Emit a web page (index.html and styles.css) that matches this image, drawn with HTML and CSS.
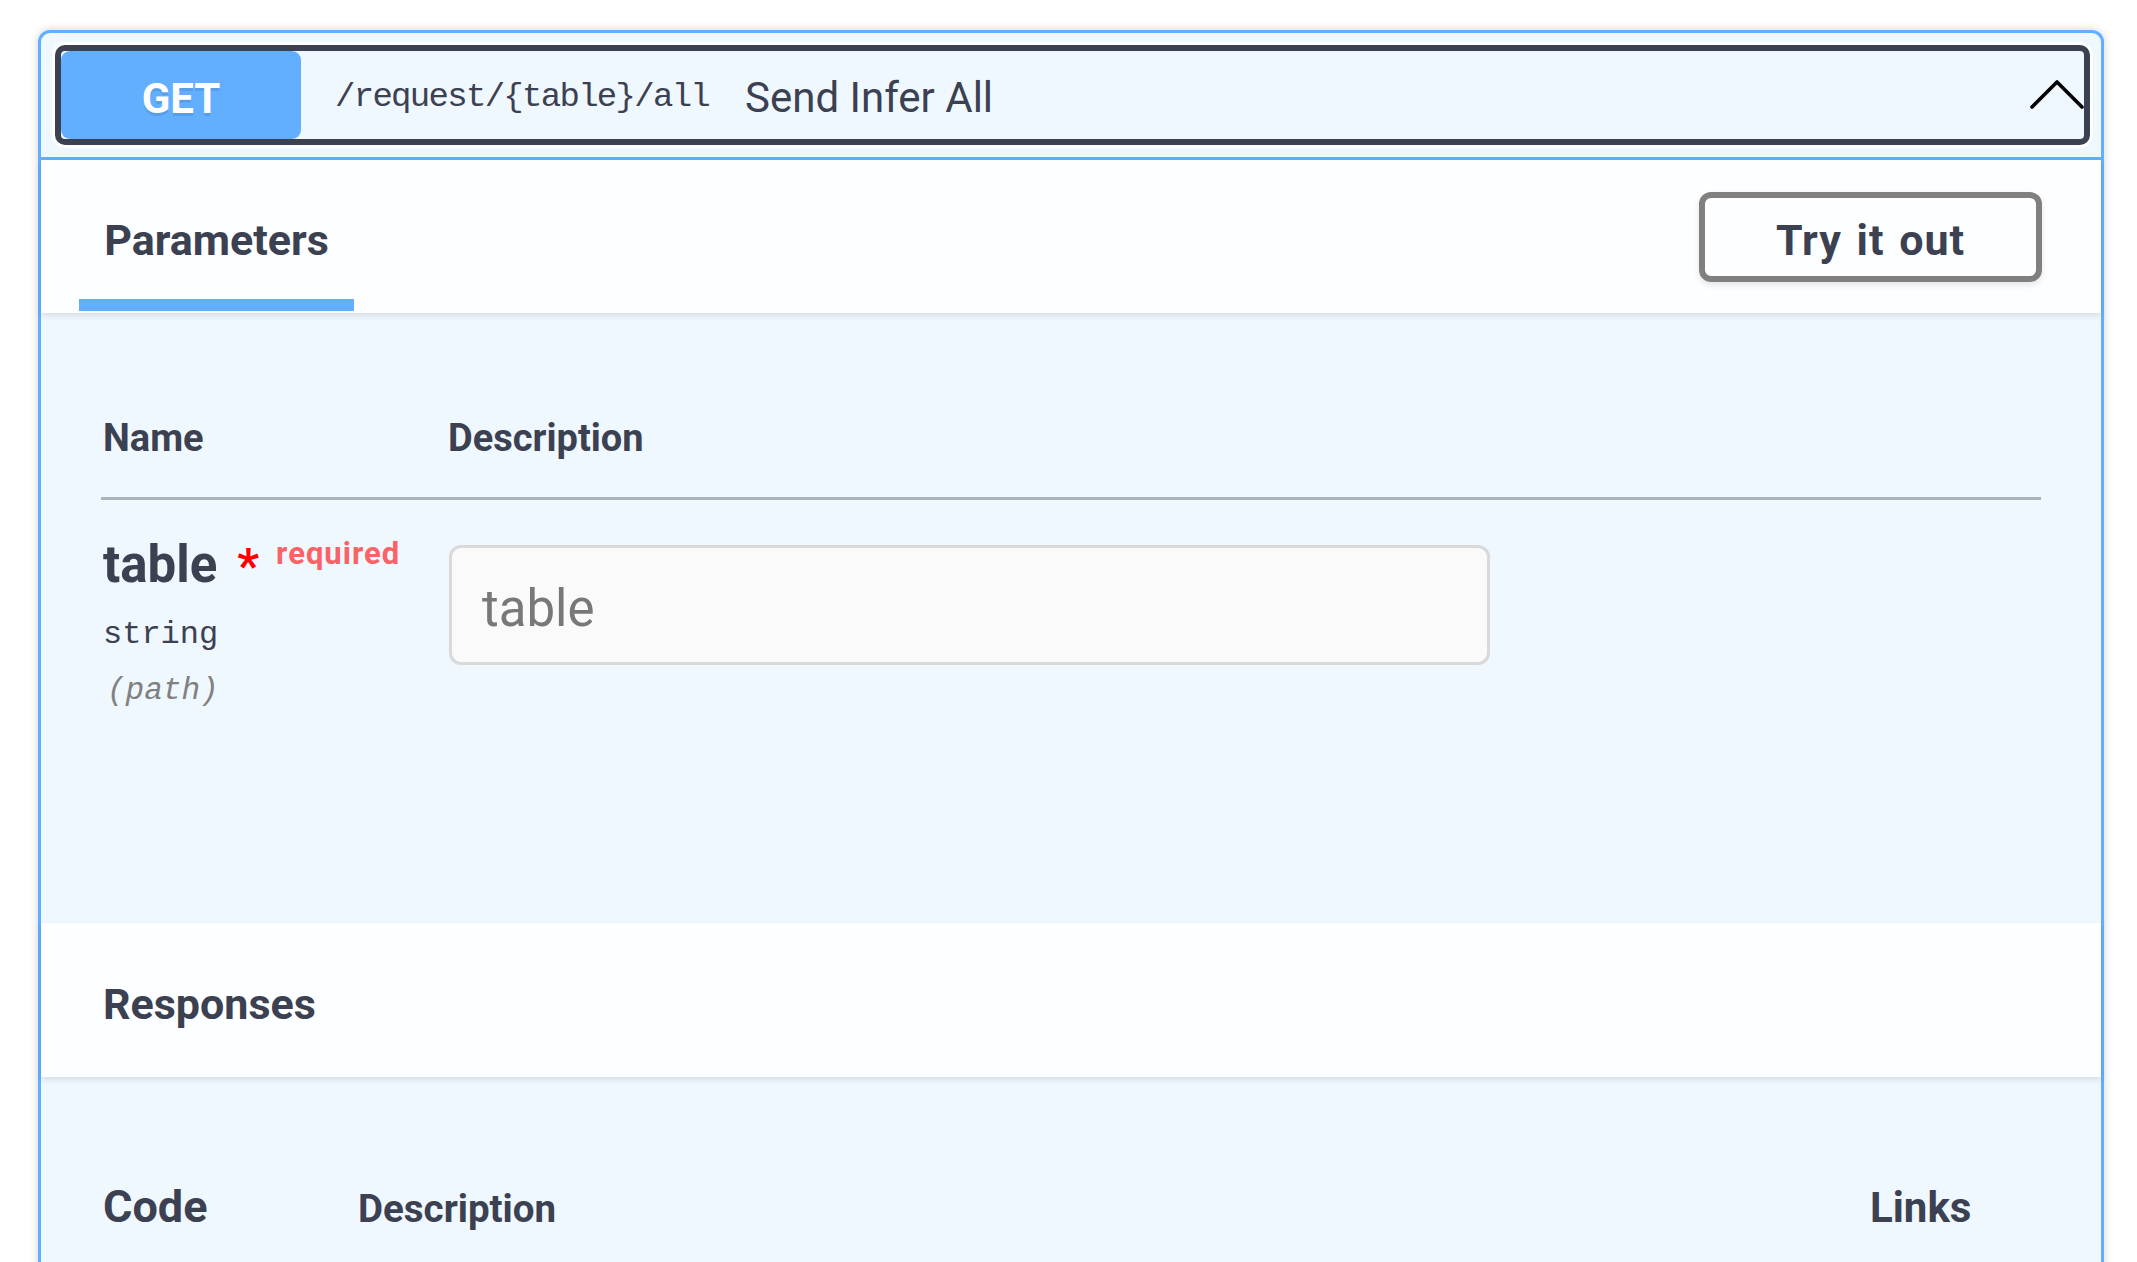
FILE: index.html
```html
<!DOCTYPE html>
<html lang="en">
<head>
<meta charset="utf-8">
<title>GET /request/{table}/all</title>
<link rel="stylesheet" href="styles.css">
</head>
<body>
<div class="opblock">
  <div class="summary">
    <div class="summary-control">
      <span class="method">GET</span>
      <span class="path">/request/{table}/all</span>
      <span class="summary-desc">Send Infer All</span>
      <svg class="arrow" viewBox="0 0 56 32" aria-hidden="true"><polyline points="3,28 28,3 53,28" fill="none" stroke="#000" stroke-width="3.6" stroke-linecap="round" stroke-linejoin="round"/></svg>
    </div>
  </div>
  <div class="section-header params-header">
    <div class="tab">
      <h4 class="tab-title">Parameters</h4>
      <span class="tab-underline"></span>
    </div>
    <button class="btn-try" type="button">Try it out</button>
  </div>
  <div class="params">
    <div class="params-table">
      <div class="th th-name">Name</div>
      <div class="th">Description</div>
      <div class="td td-name">
        <div class="param-name">table<span class="star">*</span><span class="req">required</span></div>
        <div class="param-type">string</div>
        <div class="param-in">(path)</div>
      </div>
      <div class="td td-desc">
        <input class="param-input" type="text" placeholder="table" disabled>
      </div>
    </div>
  </div>
  <div class="section-header responses-header">
    <h4 class="section-title">Responses</h4>
  </div>
  <div class="responses">
    <div class="resp-head">
      <div class="col-code">Code</div>
      <div class="col-desc">Description</div>
      <div class="col-links">Links</div>
    </div>
  </div>
</div>
</body>
</html>
```
FILE: styles.css
```css
html, body {
  margin: 0;
  padding: 0;
  overflow: hidden;
  background: #fff;
}
body {
  font-family: Roboto, "Noto Sans CJK KR", sans-serif;
  color: #3b4151;
}
.opblock {
  margin: 30px 33px 0 38px;
  border: 3px solid #61affe;
  border-radius: 12px;
  background: #eff7ff;
  box-shadow: 0 0 9px rgba(0, 0, 0, .19);
}
.summary {
  padding: 12px 11px 12px 14px;
  border-bottom: 3px solid #61affe;
}
.summary-control {
  display: flex;
  align-items: center;
  height: 100px;
  box-sizing: border-box;
  border: 6px solid #3b4151;
  border-radius: 10px;
  box-shadow: 0 0 0 3px #fff;
}
.method {
  flex: none;
  width: 240px;
  height: 88px;
  box-sizing: border-box;
  padding-top: 7px;
  line-height: 81px;
  text-align: center;
  background: #61affe;
  border-radius: 9px;
  color: #fff;
  font-weight: 700;
  font-size: 42px;
  text-shadow: 0 3px 0 rgba(0, 0, 0, .1);
}
.path {
  margin-left: 34px;
  padding-top: 3px;
  font-family: "Liberation Mono", monospace;
  font-size: 34px;
  letter-spacing: -1.7px;
  color: #3b4151;
}
.summary-desc {
  margin-left: 36px;
  padding-top: 5px;
  font-size: 42px;
  color: #3b4151;
}
.arrow {
  flex: none;
  margin-left: auto;
  margin-right: -1px;
  width: 56px;
  height: 32px;
}
.section-header {
  display: flex;
  align-items: center;
  justify-content: space-between;
  height: 153px;
  box-sizing: border-box;
  background: rgba(255, 255, 255, .8);
  box-shadow: 0 3px 6px rgba(0, 0, 0, .1);
}
.params-header {
  padding: 0 59px 0 38px;
}
.tab {
  align-self: flex-end;
  display: flex;
  flex-direction: column;
  align-items: center;
  padding-bottom: 2px;
}
.tab-title {
  margin: 0 0 29px;
  font-size: 43px;
  line-height: 60px;
  font-weight: 700;
}
.tab-underline {
  display: block;
  width: 275px;
  height: 12px;
  background: #61affe;
}
.btn-try {
  width: 343px;
  height: 90px;
  box-sizing: border-box;
  padding: 6px 0 0;
  border: 6px solid #808080;
  border-radius: 12px;
  background: transparent;
  font-family: Roboto, sans-serif;
  font-weight: 700;
  font-size: 43px;
  letter-spacing: 1px;
  word-spacing: 3px;
  color: #3b4151;
  box-shadow: 0 3px 6px rgba(0, 0, 0, .1);
}
.params {
  height: 610px;
  box-sizing: border-box;
  padding: 68px 60px 0 60px;
}
.params-table {
  display: grid;
  grid-template-columns: 347px 1fr;
}
.th {
  padding: 36px 0 37px;
  font-size: 38px;
  line-height: 43px;
  font-weight: 700;
  border-bottom: 3px solid #aab2be;
}
.th-name,
.td-name {
  padding-left: 2px;
}
.td {
  padding-top: 36px;
}
.param-name {
  font-size: 51px;
  line-height: 58px;
  font-weight: 700;
}
.star {
  margin-left: 20px;
  font-size: 48px;
  color: #f00;
}
.req {
  padding-left: 17px;
  font-size: 31px;
  line-height: 31px;
  letter-spacing: 1px;
  vertical-align: 18px;
  color: #f96366;
}
.param-type {
  margin-top: 20px;
  font-family: "Liberation Mono", monospace;
  font-size: 32px;
  line-height: 40px;
}
.param-in {
  margin-top: 16px;
  padding-left: 4px;
  font-family: "Liberation Mono", monospace;
  font-style: italic;
  font-size: 31px;
  line-height: 40px;
  color: #808080;
}
.param-input {
  display: block;
  margin: 9px 0 0 1px;
  width: 1041px;
  height: 120px;
  box-sizing: border-box;
  padding: 7px 30px 0;
  border: 3px solid #d9d9d9;
  border-radius: 12px;
  background: #fafafa;
  font-family: Roboto, sans-serif;
  font-size: 51px;
  color: #3b4151;
}
.param-input::placeholder {
  color: #787878;
}
.responses-header {
  height: 154px;
  padding: 0 60px 0 62px;
}
.section-title {
  margin: 0;
  padding-top: 7px;
  font-size: 43px;
  font-weight: 700;
}
.responses {
  padding: 100px 60px 300px 62px;
}
.resp-head {
  display: grid;
  grid-template-columns: 255px 1fr 171px;
  align-items: baseline;
  line-height: 60px;
  font-weight: 700;
}
.col-code {
  font-size: 45px;
}
.col-desc {
  font-size: 38.5px;
}
.col-links {
  font-size: 42px;
}
```
